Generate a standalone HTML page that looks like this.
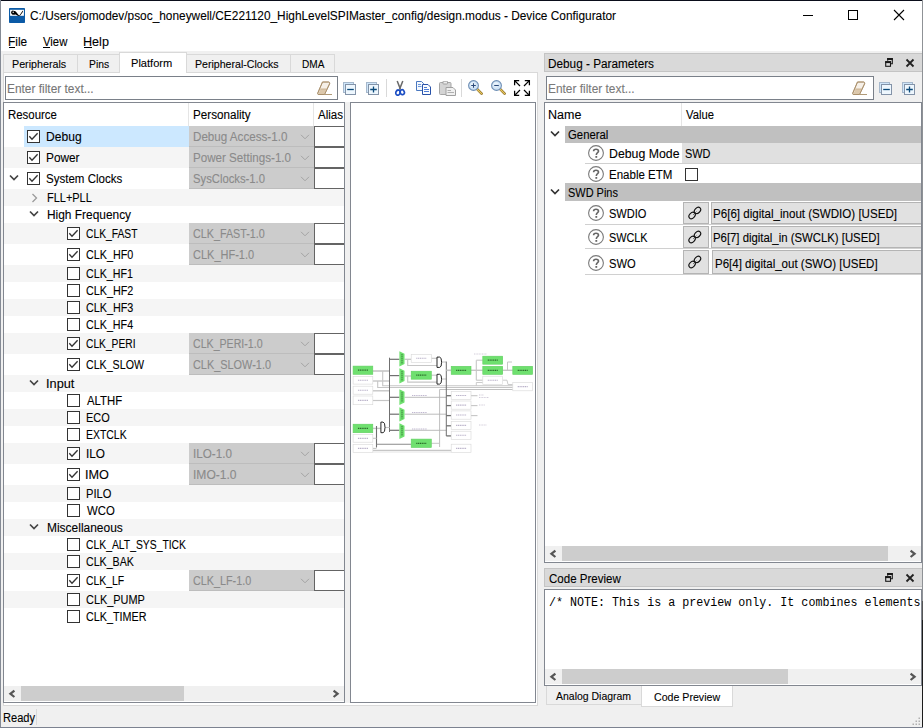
<!DOCTYPE html>
<html><head><meta charset="utf-8"><style>
html,body{margin:0;padding:0;}
body{width:923px;height:728px;overflow:hidden;position:relative;background:#f0f0f0;font-family:"Liberation Sans", sans-serif;}
div,span,svg{position:absolute;box-sizing:border-box;}
.t{white-space:pre;-webkit-text-stroke:0.1px currentColor;}
</style></head><body>

<div style="left:0px;top:0px;width:923px;height:51px;background:#fff;"></div>
<svg style="left:9px;top:8px" width="16" height="15" viewBox="0 0 16 15">
<rect x="0" y="0" width="16" height="15" rx="0.8" fill="#0b5aa6"/>
<rect x="1.1" y="1.8" width="13.8" height="6" fill="#fff"/>
<path d="M4 3.2 C5.5 2.6 6.6 3.2 7.4 4.3 L10.2 7.7 L13.8 2.5 L14 3.8 L10.8 8 H9.3 L6.6 6.6 C5.6 6.8 4.2 6.8 3.3 6 Z" fill="#000"/>
<ellipse cx="3.9" cy="4.6" rx="1.8" ry="2.1" fill="#000"/>
<circle cx="4.2" cy="4.2" r="0.7" fill="#fff"/>
</svg>
<span class="t" style="left:29.68px;top:6px;font-size:12px;line-height:20px;color:#000;transform:scaleX(0.9887);transform-origin:0 0;">C:/Users/jomodev/psoc_honeywell/CE221120_HighLevelSPIMaster_config/design.modus - Device Configurator</span>
<div style="left:803px;top:15px;width:10px;height:1px;background:#000;"></div>
<div style="left:848px;top:10px;width:10px;height:10px;border:1px solid #000;"></div>
<svg style="left:893px;top:9px" width="12" height="12" viewBox="0 0 12 12"><path d="M1 1 L11 11 M11 1 L1 11" stroke="#000" stroke-width="1.1"/></svg>
<span class="t" style="left:8.41px;top:32px;font-size:12px;line-height:20px;color:#000;transform:scaleX(0.9915);transform-origin:0 0;">File</span>
<div style="left:9.4px;top:47px;width:6px;height:1px;background:#000;"></div>
<span class="t" style="left:43.08px;top:32px;font-size:12px;line-height:20px;color:#000;transform:scaleX(0.9437);transform-origin:0 0;">View</span>
<div style="left:43.4px;top:47px;width:7px;height:1px;background:#000;"></div>
<span class="t" style="left:83.15px;top:32px;font-size:12px;line-height:20px;color:#000;transform:scaleX(1.0508);transform-origin:0 0;">Help</span>
<div style="left:84.4px;top:47px;width:8px;height:1px;background:#000;"></div>
<div style="left:3px;top:72px;width:535px;height:634px;background:#fff;border:1px solid #d9d9d9;"></div>
<div style="left:3px;top:54px;width:75px;height:19px;background:#f0f0f0;border:1px solid #d9d9d9;"></div>
<span class="t" style="left:12.05px;top:54px;font-size:11px;line-height:20px;color:#000;transform:scaleX(0.9747);transform-origin:0 0;">Peripherals</span>
<div style="left:77px;top:54px;width:44px;height:19px;background:#f0f0f0;border:1px solid #d9d9d9;"></div>
<span class="t" style="left:88.68px;top:54px;font-size:11px;line-height:20px;color:#000;transform:scaleX(0.9391);transform-origin:0 0;">Pins</span>
<div style="left:186px;top:54px;width:106px;height:19px;background:#f0f0f0;border:1px solid #d9d9d9;"></div>
<span class="t" style="left:195.36px;top:54px;font-size:11px;line-height:20px;color:#000;transform:scaleX(0.9626);transform-origin:0 0;">Peripheral-Clocks</span>
<div style="left:290px;top:54px;width:45px;height:19px;background:#f0f0f0;border:1px solid #d9d9d9;"></div>
<span class="t" style="left:301.70px;top:54px;font-size:11px;line-height:20px;color:#000;transform:scaleX(0.9149);transform-origin:0 0;">DMA</span>
<div style="left:119px;top:52px;width:68px;height:21px;background:#fff;border:1px solid #d9d9d9;border-bottom:none;"></div>
<span class="t" style="left:131.32px;top:53px;font-size:11px;line-height:20px;color:#000;transform:scaleX(1.0083);transform-origin:0 0;">Platform</span>
<div style="left:5px;top:76px;width:333px;height:24px;background:#fff;border:1px solid #7a8089;"></div>
<span class="t" style="left:6.61px;top:79px;font-size:12px;line-height:20px;color:#767676;transform:scaleX(0.9912);transform-origin:0 0;">Enter filter text...</span>
<svg style="left:317px;top:81px" width="16" height="15" viewBox="0 0 16 15">
<path d="M5.5 1 H11.5 C12.5 1 13 2 12.5 3 L7.5 13.5 H1.5 C0.8 13.5 0.5 12.8 0.8 12 Z" fill="#f6f0e8" stroke="#b09a78" stroke-width="0.9"/>
<path d="M3.6 7.5 H10 L7.3 13 H1.3 Z" fill="#dcc8ac"/>
<path d="M3.4 8.2 H9.6" stroke="#c8b090" stroke-width="0.6"/>
<path d="M5.5 1 H11.5 C12.5 1 13 2 12.5 3 L7.5 13.5 H1.5 C0.8 13.5 0.5 12.8 0.8 12 Z" fill="none" stroke="#a88c68" stroke-width="0.9"/>
<path d="M7.5 13.5 H15" stroke="#b09a78" stroke-width="1"/>
</svg>
<svg style="left:343px;top:82px" width="14" height="14" viewBox="0 0 14 14">
<rect x="0.5" y="0.5" width="10" height="10" fill="#cfe6fa" stroke="#a6b8cc"/>
<rect x="2.5" y="2.5" width="10" height="10" fill="#eef7fe" stroke="#8393a8"/>
<path d="M4.2 7.5 H10.8" stroke="#0b4a7a" stroke-width="1.3"/>
</svg>
<svg style="left:366px;top:82px" width="14" height="14" viewBox="0 0 14 14">
<rect x="0.5" y="0.5" width="10" height="10" fill="#cfe6fa" stroke="#a6b8cc"/>
<rect x="2.5" y="2.5" width="10" height="10" fill="#eef7fe" stroke="#8393a8"/>
<path d="M4.2 7.5 H10.8 M7.5 4.6 V10.6" stroke="#0b4a7a" stroke-width="1.3"/>
</svg>
<div style="left:386px;top:79px;width:1px;height:18px;background:#d9d9d9;"></div>
<svg style="left:394px;top:80px" width="12" height="16" viewBox="0 0 12 16">
<path d="M3.2 1 L6.6 9.6 M8.8 1 L5.4 9.6" stroke="#6a6a6a" stroke-width="1.5" fill="none"/>
<ellipse cx="4" cy="12.6" rx="2.1" ry="2.6" transform="rotate(25 4 12.6)" fill="none" stroke="#1d4fc4" stroke-width="1.7"/>
<ellipse cx="8.2" cy="12.2" rx="2.1" ry="2.5" transform="rotate(-25 8.2 12.2)" fill="none" stroke="#1d4fc4" stroke-width="1.7"/>
</svg>
<svg style="left:416px;top:81px" width="16" height="14" viewBox="0 0 16 14">
<path d="M0.5 0.5 H5.5 L7.5 2.5 V9.5 H0.5 Z" fill="#f4f8fd" stroke="#4a78c0" stroke-width="1"/>
<path d="M2 3.5 H5 M2 5.5 H5.5" stroke="#5a8ad8" stroke-width="0.9"/>
<path d="M6.5 3.5 H12 L14.5 6 V13.5 H6.5 Z" fill="#fafcff" stroke="#2952a8" stroke-width="1"/>
<path d="M8 6.5 H11 M8 8.5 H13 M8 10.5 H13" stroke="#3a6ed0" stroke-width="0.9"/>
</svg>
<svg style="left:439px;top:81px" width="17" height="15" viewBox="0 0 17 15">
<rect x="0.5" y="1.5" width="11.5" height="12" rx="1" fill="#d4d4d4" stroke="#a6a6a6"/>
<rect x="4" y="0.2" width="4.5" height="2.8" rx="0.6" fill="#ececec" stroke="#9a9a9a" stroke-width="0.9"/>
<path d="M7 6.5 H14 L16.5 9 V14.5 H7 Z" fill="#f0f0f0" stroke="#a0a0a0"/>
<path d="M8.5 9.5 H12 M8.5 11.5 H15" stroke="#b0b0b0"/>
</svg>
<div style="left:461px;top:79px;width:1px;height:18px;background:#d9d9d9;"></div>
<svg style="left:468px;top:80px" width="16" height="15" viewBox="0 0 16 15">
<path d="M9.2 9.2 L13.6 13.6" stroke="#8a6a20" stroke-width="2.6" stroke-linecap="round"/>
<path d="M9.2 9.2 L13.6 13.6" stroke="#e8c860" stroke-width="1.3" stroke-linecap="round"/>
<circle cx="5.5" cy="5.5" r="4.9" fill="#cfe3f6" stroke="#6f8fb5" stroke-width="1.1"/>
<circle cx="5" cy="4.8" r="2.6" fill="#eaf4fc"/>
<path d="M3.2 5.5 H7.8 M5.5 3.2 V7.8" stroke="#29497a" stroke-width="1.1"/>
</svg>
<svg style="left:491px;top:80px" width="16" height="15" viewBox="0 0 16 15">
<path d="M9.2 9.2 L13.6 13.6" stroke="#8a6a20" stroke-width="2.6" stroke-linecap="round"/>
<path d="M9.2 9.2 L13.6 13.6" stroke="#e8c860" stroke-width="1.3" stroke-linecap="round"/>
<circle cx="5.5" cy="5.5" r="4.9" fill="#cfe3f6" stroke="#6f8fb5" stroke-width="1.1"/>
<circle cx="5" cy="4.8" r="2.6" fill="#eaf4fc"/>
<path d="M3.2 5.5 H7.8" stroke="#29497a" stroke-width="1.1"/>
</svg>
<svg style="left:513px;top:79px" width="18" height="18" viewBox="0 0 18 18">
<g stroke="#000" stroke-width="1.25" fill="none">
<path d="M1.6 6.2 V1.6 H6.2 M2.4 2.4 L7 7"/>
<path d="M16.4 6.2 V1.6 H11.8 M15.6 2.4 L11 7"/>
<path d="M1.6 11.8 V16.4 H6.2 M2.4 15.6 L7 11"/>
<path d="M16.4 11.8 V16.4 H11.8 M15.6 15.6 L11 11"/>
</g></svg>
<div style="left:3px;top:102px;width:342px;height:601px;background:#fff;border:1px solid #828790;"></div>
<span class="t" style="left:7.55px;top:105px;font-size:12px;line-height:20px;color:#000;transform:scaleX(0.9508);transform-origin:0 0;">Resource</span>
<span class="t" style="left:192.83px;top:105px;font-size:12px;line-height:20px;color:#000;transform:scaleX(0.9713);transform-origin:0 0;">Personality</span>
<span class="t" style="left:318.00px;top:105px;font-size:12px;line-height:20px;color:#000;transform:scaleX(0.9600);transform-origin:0 0;">Alias</span>
<div style="left:188px;top:103px;width:1px;height:23px;background:#e5e5e5;"></div>
<div style="left:313px;top:103px;width:1px;height:23px;background:#e5e5e5;"></div>
<div style="left:24px;top:126px;width:165px;height:21px;background:#cce8ff;"></div>
<svg style="left:27px;top:130px" width="13" height="13" viewBox="0 0 13 13">
<rect x="0.5" y="0.5" width="12" height="12" fill="#fff" stroke="#333"/><path d="M2.3 6.3 L5 9.2 L10.6 3.3" fill="none" stroke="#333" stroke-width="1.35"/></svg>
<span class="t" style="left:45.59px;top:127px;font-size:12px;line-height:20px;color:#000;transform:scaleX(1.0082);transform-origin:0 0;">Debug</span>
<div style="left:189px;top:126px;width:125px;height:21px;background:#cccccc;border-bottom:1px solid #bdbdbd;"></div>
<span class="t" style="left:192.83px;top:127px;font-size:12px;line-height:20px;color:#8a8a8a;transform:scaleX(0.9688);transform-origin:0 0;">Debug Access-1.0</span>
<svg style="left:300px;top:134px" width="10" height="6" viewBox="0 0 10 6"><path d="M1 0.8 L5 4.8 L9 0.8" fill="none" stroke="#a3a3a3" stroke-width="1"/></svg>
<div style="left:314px;top:126px;width:31px;height:21px;background:#fff;border:1px solid #646464;border-right:none;"></div>
<div style="left:4px;top:147px;width:340px;height:21px;background:#f5f5f5;"></div>
<svg style="left:27px;top:151px" width="13" height="13" viewBox="0 0 13 13">
<rect x="0.5" y="0.5" width="12" height="12" fill="#fff" stroke="#333"/><path d="M2.3 6.3 L5 9.2 L10.6 3.3" fill="none" stroke="#333" stroke-width="1.35"/></svg>
<span class="t" style="left:45.61px;top:148px;font-size:12px;line-height:20px;color:#000;transform:scaleX(0.9863);transform-origin:0 0;">Power</span>
<div style="left:189px;top:147px;width:125px;height:21px;background:#cccccc;border-bottom:1px solid #bdbdbd;"></div>
<span class="t" style="left:192.83px;top:148px;font-size:12px;line-height:20px;color:#8a8a8a;transform:scaleX(0.9670);transform-origin:0 0;">Power Settings-1.0</span>
<svg style="left:300px;top:155px" width="10" height="6" viewBox="0 0 10 6"><path d="M1 0.8 L5 4.8 L9 0.8" fill="none" stroke="#a3a3a3" stroke-width="1"/></svg>
<div style="left:314px;top:147px;width:31px;height:21px;background:#fff;border:1px solid #646464;border-right:none;"></div>
<svg style="left:27px;top:172px" width="13" height="13" viewBox="0 0 13 13">
<rect x="0.5" y="0.5" width="12" height="12" fill="#fff" stroke="#333"/><path d="M2.3 6.3 L5 9.2 L10.6 3.3" fill="none" stroke="#333" stroke-width="1.35"/></svg>
<span class="t" style="left:46.12px;top:169px;font-size:12px;line-height:20px;color:#000;transform:scaleX(0.9605);transform-origin:0 0;">System Clocks</span>
<svg style="left:8.6px;top:174px" width="10" height="7" viewBox="0 0 10 7"><path d="M1 1.5 L5 5.5 L9 1.5" fill="none" stroke="#444" stroke-width="1.7"/></svg>
<div style="left:189px;top:168px;width:125px;height:21px;background:#cccccc;border-bottom:1px solid #bdbdbd;"></div>
<span class="t" style="left:193.33px;top:169px;font-size:12px;line-height:20px;color:#8a8a8a;transform:scaleX(0.9386);transform-origin:0 0;">SysClocks-1.0</span>
<svg style="left:300px;top:176px" width="10" height="6" viewBox="0 0 10 6"><path d="M1 0.8 L5 4.8 L9 0.8" fill="none" stroke="#a3a3a3" stroke-width="1"/></svg>
<div style="left:314px;top:168px;width:31px;height:21px;background:#fff;border:1px solid #646464;border-right:none;"></div>
<div style="left:4px;top:189px;width:340px;height:17px;background:#f5f5f5;"></div>
<svg style="left:31px;top:193px" width="7" height="10" viewBox="0 0 7 10"><path d="M1.5 1 L5.5 5 L1.5 9" fill="none" stroke="#9a9a9a" stroke-width="1.3"/></svg>
<span class="t" style="left:46.69px;top:188px;font-size:12px;line-height:20px;color:#000;transform:scaleX(0.9134);transform-origin:0 0;">FLL+PLL</span>
<svg style="left:28.8px;top:210px" width="10" height="7" viewBox="0 0 10 7"><path d="M1 1.5 L5 5.5 L9 1.5" fill="none" stroke="#444" stroke-width="1.7"/></svg>
<span class="t" style="left:46.61px;top:205px;font-size:12px;line-height:20px;color:#000;transform:scaleX(0.9922);transform-origin:0 0;">High Frequency</span>
<div style="left:4px;top:223px;width:340px;height:21px;background:#f5f5f5;"></div>
<svg style="left:67px;top:227px" width="13" height="13" viewBox="0 0 13 13">
<rect x="0.5" y="0.5" width="12" height="12" fill="#fff" stroke="#333"/><path d="M2.3 6.3 L5 9.2 L10.6 3.3" fill="none" stroke="#333" stroke-width="1.35"/></svg>
<span class="t" style="left:86.06px;top:224px;font-size:12px;line-height:20px;color:#000;transform:scaleX(0.8574);transform-origin:0 0;">CLK_FAST</span>
<div style="left:189px;top:223px;width:125px;height:21px;background:#cccccc;border-bottom:1px solid #bdbdbd;"></div>
<span class="t" style="left:193.24px;top:224px;font-size:12px;line-height:20px;color:#8a8a8a;transform:scaleX(0.8962);transform-origin:0 0;">CLK_FAST-1.0</span>
<svg style="left:300px;top:231px" width="10" height="6" viewBox="0 0 10 6"><path d="M1 0.8 L5 4.8 L9 0.8" fill="none" stroke="#a3a3a3" stroke-width="1"/></svg>
<div style="left:314px;top:223px;width:31px;height:21px;background:#fff;border:1px solid #646464;border-right:none;"></div>
<svg style="left:67px;top:248px" width="13" height="13" viewBox="0 0 13 13">
<rect x="0.5" y="0.5" width="12" height="12" fill="#fff" stroke="#333"/><path d="M2.3 6.3 L5 9.2 L10.6 3.3" fill="none" stroke="#333" stroke-width="1.35"/></svg>
<span class="t" style="left:86.04px;top:245px;font-size:12px;line-height:20px;color:#000;transform:scaleX(0.8969);transform-origin:0 0;">CLK_HF0</span>
<div style="left:189px;top:244px;width:125px;height:21px;background:#cccccc;border-bottom:1px solid #bdbdbd;"></div>
<span class="t" style="left:193.23px;top:245px;font-size:12px;line-height:20px;color:#8a8a8a;transform:scaleX(0.9158);transform-origin:0 0;">CLK_HF-1.0</span>
<svg style="left:300px;top:252px" width="10" height="6" viewBox="0 0 10 6"><path d="M1 0.8 L5 4.8 L9 0.8" fill="none" stroke="#a3a3a3" stroke-width="1"/></svg>
<div style="left:314px;top:244px;width:31px;height:21px;background:#fff;border:1px solid #646464;border-right:none;"></div>
<div style="left:4px;top:265px;width:340px;height:17px;background:#f5f5f5;"></div>
<svg style="left:67px;top:267px" width="13" height="13" viewBox="0 0 13 13">
<rect x="0.5" y="0.5" width="12" height="12" fill="#fff" stroke="#333"/></svg>
<span class="t" style="left:86.04px;top:264px;font-size:12px;line-height:20px;color:#000;transform:scaleX(0.8893);transform-origin:0 0;">CLK_HF1</span>
<svg style="left:67px;top:284px" width="13" height="13" viewBox="0 0 13 13">
<rect x="0.5" y="0.5" width="12" height="12" fill="#fff" stroke="#333"/></svg>
<span class="t" style="left:86.04px;top:281px;font-size:12px;line-height:20px;color:#000;transform:scaleX(0.8990);transform-origin:0 0;">CLK_HF2</span>
<div style="left:4px;top:299px;width:340px;height:17px;background:#f5f5f5;"></div>
<svg style="left:67px;top:301px" width="13" height="13" viewBox="0 0 13 13">
<rect x="0.5" y="0.5" width="12" height="12" fill="#fff" stroke="#333"/></svg>
<span class="t" style="left:86.04px;top:298px;font-size:12px;line-height:20px;color:#000;transform:scaleX(0.8990);transform-origin:0 0;">CLK_HF3</span>
<svg style="left:67px;top:318px" width="13" height="13" viewBox="0 0 13 13">
<rect x="0.5" y="0.5" width="12" height="12" fill="#fff" stroke="#333"/></svg>
<span class="t" style="left:86.04px;top:315px;font-size:12px;line-height:20px;color:#000;transform:scaleX(0.8947);transform-origin:0 0;">CLK_HF4</span>
<div style="left:4px;top:333px;width:340px;height:21px;background:#f5f5f5;"></div>
<svg style="left:67px;top:337px" width="13" height="13" viewBox="0 0 13 13">
<rect x="0.5" y="0.5" width="12" height="12" fill="#fff" stroke="#333"/><path d="M2.3 6.3 L5 9.2 L10.6 3.3" fill="none" stroke="#333" stroke-width="1.35"/></svg>
<span class="t" style="left:86.07px;top:334px;font-size:12px;line-height:20px;color:#000;transform:scaleX(0.8532);transform-origin:0 0;">CLK_PERI</span>
<div style="left:189px;top:333px;width:125px;height:21px;background:#cccccc;border-bottom:1px solid #bdbdbd;"></div>
<span class="t" style="left:193.25px;top:334px;font-size:12px;line-height:20px;color:#8a8a8a;transform:scaleX(0.8837);transform-origin:0 0;">CLK_PERI-1.0</span>
<svg style="left:300px;top:341px" width="10" height="6" viewBox="0 0 10 6"><path d="M1 0.8 L5 4.8 L9 0.8" fill="none" stroke="#a3a3a3" stroke-width="1"/></svg>
<div style="left:314px;top:333px;width:31px;height:21px;background:#fff;border:1px solid #646464;border-right:none;"></div>
<svg style="left:67px;top:358px" width="13" height="13" viewBox="0 0 13 13">
<rect x="0.5" y="0.5" width="12" height="12" fill="#fff" stroke="#333"/><path d="M2.3 6.3 L5 9.2 L10.6 3.3" fill="none" stroke="#333" stroke-width="1.35"/></svg>
<span class="t" style="left:86.05px;top:355px;font-size:12px;line-height:20px;color:#000;transform:scaleX(0.8867);transform-origin:0 0;">CLK_SLOW</span>
<div style="left:189px;top:354px;width:125px;height:21px;background:#cccccc;border-bottom:1px solid #bdbdbd;"></div>
<span class="t" style="left:193.23px;top:355px;font-size:12px;line-height:20px;color:#8a8a8a;transform:scaleX(0.9086);transform-origin:0 0;">CLK_SLOW-1.0</span>
<svg style="left:300px;top:362px" width="10" height="6" viewBox="0 0 10 6"><path d="M1 0.8 L5 4.8 L9 0.8" fill="none" stroke="#a3a3a3" stroke-width="1"/></svg>
<div style="left:314px;top:354px;width:31px;height:21px;background:#fff;border:1px solid #646464;border-right:none;"></div>
<div style="left:4px;top:375px;width:340px;height:17px;background:#f5f5f5;"></div>
<svg style="left:28.8px;top:379px" width="10" height="7" viewBox="0 0 10 7"><path d="M1 1.5 L5 5.5 L9 1.5" fill="none" stroke="#444" stroke-width="1.7"/></svg>
<span class="t" style="left:46.40px;top:374px;font-size:12px;line-height:20px;color:#000;transform:scaleX(1.0627);transform-origin:0 0;">Input</span>
<svg style="left:67px;top:394px" width="13" height="13" viewBox="0 0 13 13">
<rect x="0.5" y="0.5" width="12" height="12" fill="#fff" stroke="#333"/></svg>
<span class="t" style="left:86.60px;top:391px;font-size:12px;line-height:20px;color:#000;transform:scaleX(0.9474);transform-origin:0 0;">ALTHF</span>
<div style="left:4px;top:409px;width:340px;height:17px;background:#f5f5f5;"></div>
<svg style="left:67px;top:411px" width="13" height="13" viewBox="0 0 13 13">
<rect x="0.5" y="0.5" width="12" height="12" fill="#fff" stroke="#333"/></svg>
<span class="t" style="left:85.69px;top:408px;font-size:12px;line-height:20px;color:#000;transform:scaleX(0.9108);transform-origin:0 0;">ECO</span>
<svg style="left:67px;top:428px" width="13" height="13" viewBox="0 0 13 13">
<rect x="0.5" y="0.5" width="12" height="12" fill="#fff" stroke="#333"/></svg>
<span class="t" style="left:85.73px;top:425px;font-size:12px;line-height:20px;color:#000;transform:scaleX(0.8703);transform-origin:0 0;">EXTCLK</span>
<div style="left:4px;top:443px;width:340px;height:21px;background:#f5f5f5;"></div>
<svg style="left:67px;top:447px" width="13" height="13" viewBox="0 0 13 13">
<rect x="0.5" y="0.5" width="12" height="12" fill="#fff" stroke="#333"/><path d="M2.3 6.3 L5 9.2 L10.6 3.3" fill="none" stroke="#333" stroke-width="1.35"/></svg>
<span class="t" style="left:85.50px;top:444px;font-size:12px;line-height:20px;color:#000;transform:scaleX(0.9816);transform-origin:0 0;">ILO</span>
<div style="left:189px;top:443px;width:125px;height:21px;background:#cccccc;border-bottom:1px solid #bdbdbd;"></div>
<span class="t" style="left:192.71px;top:444px;font-size:12px;line-height:20px;color:#8a8a8a;transform:scaleX(0.9714);transform-origin:0 0;">ILO-1.0</span>
<svg style="left:300px;top:451px" width="10" height="6" viewBox="0 0 10 6"><path d="M1 0.8 L5 4.8 L9 0.8" fill="none" stroke="#a3a3a3" stroke-width="1"/></svg>
<div style="left:314px;top:443px;width:31px;height:21px;background:#fff;border:1px solid #646464;border-right:none;"></div>
<svg style="left:67px;top:468px" width="13" height="13" viewBox="0 0 13 13">
<rect x="0.5" y="0.5" width="12" height="12" fill="#fff" stroke="#333"/><path d="M2.3 6.3 L5 9.2 L10.6 3.3" fill="none" stroke="#333" stroke-width="1.35"/></svg>
<span class="t" style="left:85.41px;top:465px;font-size:12px;line-height:20px;color:#000;transform:scaleX(1.0571);transform-origin:0 0;">IMO</span>
<div style="left:189px;top:464px;width:125px;height:21px;background:#cccccc;border-bottom:1px solid #bdbdbd;"></div>
<span class="t" style="left:192.67px;top:465px;font-size:12px;line-height:20px;color:#8a8a8a;transform:scaleX(1.0036);transform-origin:0 0;">IMO-1.0</span>
<svg style="left:300px;top:472px" width="10" height="6" viewBox="0 0 10 6"><path d="M1 0.8 L5 4.8 L9 0.8" fill="none" stroke="#a3a3a3" stroke-width="1"/></svg>
<div style="left:314px;top:464px;width:31px;height:21px;background:#fff;border:1px solid #646464;border-right:none;"></div>
<div style="left:4px;top:485px;width:340px;height:17px;background:#f5f5f5;"></div>
<svg style="left:67px;top:487px" width="13" height="13" viewBox="0 0 13 13">
<rect x="0.5" y="0.5" width="12" height="12" fill="#fff" stroke="#333"/></svg>
<span class="t" style="left:85.67px;top:484px;font-size:12px;line-height:20px;color:#000;transform:scaleX(0.9282);transform-origin:0 0;">PILO</span>
<svg style="left:67px;top:504px" width="13" height="13" viewBox="0 0 13 13">
<rect x="0.5" y="0.5" width="12" height="12" fill="#fff" stroke="#333"/></svg>
<span class="t" style="left:86.60px;top:501px;font-size:12px;line-height:20px;color:#000;transform:scaleX(0.9461);transform-origin:0 0;">WCO</span>
<div style="left:4px;top:519px;width:340px;height:17px;background:#f5f5f5;"></div>
<svg style="left:28.8px;top:523px" width="10" height="7" viewBox="0 0 10 7"><path d="M1 1.5 L5 5.5 L9 1.5" fill="none" stroke="#444" stroke-width="1.7"/></svg>
<span class="t" style="left:46.60px;top:518px;font-size:12px;line-height:20px;color:#000;transform:scaleX(0.9970);transform-origin:0 0;">Miscellaneous</span>
<svg style="left:67px;top:538px" width="13" height="13" viewBox="0 0 13 13">
<rect x="0.5" y="0.5" width="12" height="12" fill="#fff" stroke="#333"/></svg>
<span class="t" style="left:86.06px;top:535px;font-size:12px;line-height:20px;color:#000;transform:scaleX(0.8634);transform-origin:0 0;">CLK_ALT_SYS_TICK</span>
<div style="left:4px;top:553px;width:340px;height:17px;background:#f5f5f5;"></div>
<svg style="left:67px;top:555px" width="13" height="13" viewBox="0 0 13 13">
<rect x="0.5" y="0.5" width="12" height="12" fill="#fff" stroke="#333"/></svg>
<span class="t" style="left:86.05px;top:552px;font-size:12px;line-height:20px;color:#000;transform:scaleX(0.8864);transform-origin:0 0;">CLK_BAK</span>
<svg style="left:67px;top:574px" width="13" height="13" viewBox="0 0 13 13">
<rect x="0.5" y="0.5" width="12" height="12" fill="#fff" stroke="#333"/><path d="M2.3 6.3 L5 9.2 L10.6 3.3" fill="none" stroke="#333" stroke-width="1.35"/></svg>
<span class="t" style="left:86.06px;top:571px;font-size:12px;line-height:20px;color:#000;transform:scaleX(0.8674);transform-origin:0 0;">CLK_LF</span>
<div style="left:189px;top:570px;width:125px;height:21px;background:#cccccc;border-bottom:1px solid #bdbdbd;"></div>
<span class="t" style="left:193.24px;top:571px;font-size:12px;line-height:20px;color:#8a8a8a;transform:scaleX(0.8990);transform-origin:0 0;">CLK_LF-1.0</span>
<svg style="left:300px;top:578px" width="10" height="6" viewBox="0 0 10 6"><path d="M1 0.8 L5 4.8 L9 0.8" fill="none" stroke="#a3a3a3" stroke-width="1"/></svg>
<div style="left:314px;top:570px;width:31px;height:21px;background:#fff;border:1px solid #646464;border-right:none;"></div>
<div style="left:4px;top:591px;width:340px;height:17px;background:#f5f5f5;"></div>
<svg style="left:67px;top:593px" width="13" height="13" viewBox="0 0 13 13">
<rect x="0.5" y="0.5" width="12" height="12" fill="#fff" stroke="#333"/></svg>
<span class="t" style="left:86.03px;top:590px;font-size:12px;line-height:20px;color:#000;transform:scaleX(0.9105);transform-origin:0 0;">CLK_PUMP</span>
<svg style="left:67px;top:610px" width="13" height="13" viewBox="0 0 13 13">
<rect x="0.5" y="0.5" width="12" height="12" fill="#fff" stroke="#333"/></svg>
<span class="t" style="left:86.04px;top:607px;font-size:12px;line-height:20px;color:#000;transform:scaleX(0.8968);transform-origin:0 0;">CLK_TIMER</span>
<div style="left:4px;top:686px;width:340px;height:15px;background:#f0f0f0;"></div>
<div style="left:21px;top:686px;width:163px;height:15px;background:#cdcdcd;"></div>
<svg style="left:8px;top:689px" width="8" height="10" viewBox="0 0 8 10"><path d="M6.4 1.6 L2.4 4.8 L6.4 8" fill="none" stroke="#555" stroke-width="2.2"/></svg>
<svg style="left:332px;top:689px" width="8" height="10" viewBox="0 0 8 10"><path d="M1.6 1.6 L5.6 4.8 L1.6 8" fill="none" stroke="#555" stroke-width="2.2"/></svg>
<div style="left:3px;top:102px;width:342px;height:601px;border:1px solid #828790;"></div>
<div style="left:345px;top:102px;width:5px;height:601px;background:#f0f0f0;"></div>
<div style="left:350px;top:102px;width:186px;height:601px;background:#fff;border:1px solid #828790;"></div>
<svg style="left:0;top:0" width="923" height="728" viewBox="0 0 923 728"><path d="M372.8 371 L389.5 371" stroke="#c6c6c6" stroke-width="1.6" fill="none"/><path d="M372.8 381 L389.5 381" stroke="#c6c6c6" stroke-width="1.4" fill="none"/><path d="M372.8 390.8 L389.5 390.8" stroke="#c6c6c6" stroke-width="1.4" fill="none"/><path d="M372.8 400.5 L389.5 400.5" stroke="#c6c6c6" stroke-width="1.2" fill="none"/><path d="M382.7 371 L382.7 385.7 L512.8 385.7" stroke="#c6c6c6" stroke-width="1.1" fill="none"/><path d="M377.7 381 L377.7 387.5 L512.8 387.5" stroke="#c6c6c6" stroke-width="1.1" fill="none"/><path d="M439.6 447 L439.6 389.5 L512.8 389.5" stroke="#b8b8b8" stroke-width="0.9" fill="none"/><path d="M389.5 357.7 L389.5 432" stroke="#707070" stroke-width="1.0" fill="none"/><path d="M389.5 359.3 L399.4 359.3" stroke="#707070" stroke-width="1.2" fill="none"/><path d="M389.5 375.6 L399.4 375.6" stroke="#707070" stroke-width="1.2" fill="none"/><path d="M389.5 397.3 L399.4 397.3" stroke="#707070" stroke-width="1.2" fill="none"/><path d="M389.5 414.2 L399.4 414.2" stroke="#707070" stroke-width="1.2" fill="none"/><path d="M389.5 430.3 L399.4 430.3" stroke="#707070" stroke-width="1.2" fill="none"/><path d="M404.5 359.3 L411.2 359.3" stroke="#c6c6c6" stroke-width="1.3" fill="none"/><path d="M407.7 359.3 L407.7 365.5 L437 365.5" stroke="#c6c6c6" stroke-width="1.1" fill="none"/><path d="M431.3 358.3 L437 358.3" stroke="#c6c6c6" stroke-width="1.1" fill="none"/><path d="M404.5 376 L411.2 376" stroke="#c6c6c6" stroke-width="1.3" fill="none"/><path d="M407.7 376 L407.7 382.1 L437 382.1" stroke="#c6c6c6" stroke-width="1.1" fill="none"/><path d="M431.3 375.2 L437 375.2" stroke="#c6c6c6" stroke-width="1.1" fill="none"/><path d="M441.6 362 L446.4 362" stroke="#c6c6c6" stroke-width="1.1" fill="none"/><path d="M441.6 379 L446.4 379" stroke="#c6c6c6" stroke-width="1.1" fill="none"/><path d="M404.5 397.3 L446.4 397.3" stroke="#b4b4b4" stroke-width="0.9" fill="none"/><path d="M404.5 414.2 L446.4 414.2" stroke="#b4b4b4" stroke-width="0.9" fill="none"/><path d="M404.5 430.3 L446.4 430.3" stroke="#b4b4b4" stroke-width="0.9" fill="none"/><path d="M446.3 361.6 L446.3 436" stroke="#707070" stroke-width="1.0" fill="none"/><path d="M446.3 370.3 L451.2 370.3" stroke="#c6c6c6" stroke-width="1.6" fill="none"/><path d="M446.3 395.7 L451.2 395.7" stroke="#707070" stroke-width="1.3" fill="none"/><path d="M446.3 405.6 L451.2 405.6" stroke="#707070" stroke-width="1.3" fill="none"/><path d="M446.3 415.6 L451.2 415.6" stroke="#707070" stroke-width="1.3" fill="none"/><path d="M446.3 425.8 L451.2 425.8" stroke="#707070" stroke-width="1.3" fill="none"/><path d="M446.3 435.9 L451.2 435.9" stroke="#707070" stroke-width="1.3" fill="none"/><path d="M471 370.3 L482.8 370.3" stroke="#c6c6c6" stroke-width="1.4" fill="none"/><path d="M476.3 360.2 L476.3 380.2" stroke="#c6c6c6" stroke-width="1.1" fill="none"/><path d="M476.3 360.2 L482.8 360.2" stroke="#c6c6c6" stroke-width="1.1" fill="none"/><path d="M476.3 380.2 L482.8 380.2" stroke="#c6c6c6" stroke-width="1.1" fill="none"/><path d="M502.7 370.3 L512.8 370.3" stroke="#c6c6c6" stroke-width="1.4" fill="none"/><path d="M507.5 370.3 L507.5 362 L512 362" stroke="#c6c6c6" stroke-width="1.0" fill="none"/><path d="M502.7 380.2 L507 380.2 L508 384.5 L512.8 384.5" stroke="#c6c6c6" stroke-width="0.9" fill="none"/><path d="M476.3 385.7 L476.3 382.5 L482.8 382.5" stroke="#c6c6c6" stroke-width="0.9" fill="none"/><path d="M471 395.7 L477.5 395.7" stroke="#c6c6c6" stroke-width="1.1" fill="none"/><path d="M471 405.6 L477.5 405.6" stroke="#c6c6c6" stroke-width="1.1" fill="none"/><path d="M471 415.6 L477.5 415.6" stroke="#c6c6c6" stroke-width="1.1" fill="none"/><path d="M372.8 428.4 L380.9 428.4" stroke="#c6c6c6" stroke-width="1.4" fill="none"/><path d="M385 427.5 L389.5 427.5" stroke="#c6c6c6" stroke-width="1.1" fill="none"/><path d="M376.5 426 L376.5 447.5" stroke="#707070" stroke-width="1.1" fill="none"/><path d="M372.8 438.3 L376.5 438.3" stroke="#c6c6c6" stroke-width="1.1" fill="none"/><path d="M372.8 448.4 L376.5 448.4" stroke="#c6c6c6" stroke-width="1.1" fill="none"/><path d="M376.5 444.3 L411.2 444.3" stroke="#8a8a8a" stroke-width="1.1" fill="none"/><path d="M431.3 443.3 L439.6 443.3" stroke="#c6c6c6" stroke-width="1.0" fill="none"/><path d="M372.8 450.4 L451.2 450.4" stroke="#c6c6c6" stroke-width="1.1" fill="none"/><path d="M372.8 452 L451.2 452" stroke="#dcdcdc" stroke-width="0.8" fill="none"/><rect x="353.1" y="366.1" width="19.69999999999999" height="8.199999999999989" fill="#6fe06f" stroke="#5fcf5f" stroke-width="0.6"/><rect x="353.1" y="376.4" width="19.69999999999999" height="7.7000000000000455" fill="#fff" stroke="#d8d8d8" stroke-width="0.6"/><rect x="353.1" y="386.2" width="19.69999999999999" height="8.0" fill="#fff" stroke="#d8d8d8" stroke-width="0.6"/><rect x="353.1" y="396" width="19.69999999999999" height="8.699999999999989" fill="#fff" stroke="#d8d8d8" stroke-width="0.6"/><rect x="353.1" y="424.2" width="19.69999999999999" height="8.5" fill="#6fe06f" stroke="#5fcf5f" stroke-width="0.6"/><rect x="353.1" y="434.5" width="19.69999999999999" height="7.699999999999989" fill="#fff" stroke="#d8d8d8" stroke-width="0.6"/><rect x="353.1" y="444.3" width="19.69999999999999" height="8.199999999999989" fill="#fff" stroke="#d8d8d8" stroke-width="0.6"/><path d="M399.4 351.2 L404.5 353.7 L404.5 364.1 L399.4 366.6 Z" fill="#6fe06f"/><path d="M399.4 368.2 L404.5 370.7 L404.5 381.1 L399.4 383.6 Z" fill="#6fe06f"/><path d="M399.4 389.3 L404.5 391.8 L404.5 402.5 L399.4 405 Z" fill="#6fe06f"/><path d="M399.4 407.2 L404.5 409.7 L404.5 419.1 L399.4 421.6 Z" fill="#6fe06f"/><path d="M399.4 423.2 L404.5 425.7 L404.5 436.4 L399.4 438.9 Z" fill="#6fe06f"/><rect x="411.2" y="354.3" width="20.100000000000023" height="8.0" fill="#fff" stroke="#d8d8d8" stroke-width="0.6"/><rect x="411.2" y="371.2" width="20.100000000000023" height="8.0" fill="#6fe06f" stroke="#5fcf5f" stroke-width="0.6"/><path d="M437 357.1 H439.6 Q441.6 357.1 441.6 362.25 Q441.6 367.4 439.6 367.4 H437 Z" fill="#fff" stroke="#111" stroke-width="0.9"/><path d="M437 374.3 H439.6 Q441.6 374.3 441.6 379.20000000000005 Q441.6 384.1 439.6 384.1 H437 Z" fill="#fff" stroke="#111" stroke-width="0.9"/><path d="M380.9 422.1 H383 Q385 422.1 385 427.4 Q385 432.7 383 432.7 H380.9 Z" fill="#fff" stroke="#111" stroke-width="0.9"/><rect x="411.2" y="439.1" width="20.100000000000023" height="8.399999999999977" fill="#6fe06f" stroke="#5fcf5f" stroke-width="0.6"/><rect x="451.2" y="366.3" width="19.80000000000001" height="8.099999999999966" fill="#6fe06f" stroke="#5fcf5f" stroke-width="0.6"/><rect x="482.8" y="356.2" width="19.899999999999977" height="8.0" fill="#6fe06f" stroke="#5fcf5f" stroke-width="0.6"/><rect x="482.8" y="366.3" width="19.899999999999977" height="8.099999999999966" fill="#6fe06f" stroke="#5fcf5f" stroke-width="0.6"/><rect x="512.8" y="366.3" width="19.800000000000068" height="8.099999999999966" fill="#6fe06f" stroke="#5fcf5f" stroke-width="0.6"/><rect x="482.8" y="376.2" width="19.899999999999977" height="8.100000000000023" fill="#fff" stroke="#d8d8d8" stroke-width="0.6"/><rect x="512.8" y="382.4" width="19.800000000000068" height="8.400000000000034" fill="#fff" stroke="#d8d8d8" stroke-width="0.6"/><rect x="451.2" y="391.3" width="19.80000000000001" height="8.300000000000011" fill="#fff" stroke="#d8d8d8" stroke-width="0.6"/><rect x="451.2" y="401" width="19.80000000000001" height="8.199999999999989" fill="#fff" stroke="#d8d8d8" stroke-width="0.6"/><rect x="451.2" y="410.9" width="19.80000000000001" height="8.300000000000011" fill="#fff" stroke="#d8d8d8" stroke-width="0.6"/><rect x="451.2" y="421.3" width="19.80000000000001" height="8.099999999999966" fill="#fff" stroke="#d8d8d8" stroke-width="0.6"/><rect x="451.2" y="431.2" width="19.80000000000001" height="8.100000000000023" fill="#fff" stroke="#d8d8d8" stroke-width="0.6"/><rect x="451.2" y="444.2" width="19.80000000000001" height="8.300000000000011" fill="#fff" stroke="#d8d8d8" stroke-width="0.6"/><path d="M357.95000000000005 370.20000000000005 H367.95000000000005" stroke="#2a6a2a" stroke-width="1.2" stroke-dasharray="1.2 0.6"/><path d="M357.95000000000005 428.45 H367.95000000000005" stroke="#2a6a2a" stroke-width="1.2" stroke-dasharray="1.2 0.6"/><path d="M416.25 375.2 H426.25" stroke="#2a6a2a" stroke-width="1.2" stroke-dasharray="1.2 0.6"/><path d="M416.25 443.3 H426.25" stroke="#2a6a2a" stroke-width="1.2" stroke-dasharray="1.2 0.6"/><path d="M456.1 370.35 H466.1" stroke="#2a6a2a" stroke-width="1.2" stroke-dasharray="1.2 0.6"/><path d="M487.75 360.2 H497.75" stroke="#2a6a2a" stroke-width="1.2" stroke-dasharray="1.2 0.6"/><path d="M487.75 370.35 H497.75" stroke="#2a6a2a" stroke-width="1.2" stroke-dasharray="1.2 0.6"/><path d="M517.7 370.35 H527.7" stroke="#2a6a2a" stroke-width="1.2" stroke-dasharray="1.2 0.6"/><path d="M357.95000000000005 380.25 H367.95000000000005" stroke="#b8b0c8" stroke-width="1.1" stroke-dasharray="1.2 0.6"/><path d="M357.95000000000005 390.2 H367.95000000000005" stroke="#b8b0c8" stroke-width="1.1" stroke-dasharray="1.2 0.6"/><path d="M357.95000000000005 400.35 H367.95000000000005" stroke="#b8b0c8" stroke-width="1.1" stroke-dasharray="1.2 0.6"/><path d="M357.95000000000005 438.35 H367.95000000000005" stroke="#b8b0c8" stroke-width="1.1" stroke-dasharray="1.2 0.6"/><path d="M357.95000000000005 448.4 H367.95000000000005" stroke="#b8b0c8" stroke-width="1.1" stroke-dasharray="1.2 0.6"/><path d="M416.25 358.3 H426.25" stroke="#b8b0c8" stroke-width="1.1" stroke-dasharray="1.2 0.6"/><path d="M487.75 380.25 H497.75" stroke="#b8b0c8" stroke-width="1.1" stroke-dasharray="1.2 0.6"/><path d="M517.7 386.6 H527.7" stroke="#b8b0c8" stroke-width="1.1" stroke-dasharray="1.2 0.6"/><path d="M456.1 395.45000000000005 H466.1" stroke="#b8b0c8" stroke-width="1.1" stroke-dasharray="1.2 0.6"/><path d="M456.1 405.1 H466.1" stroke="#b8b0c8" stroke-width="1.1" stroke-dasharray="1.2 0.6"/><path d="M456.1 415.04999999999995 H466.1" stroke="#b8b0c8" stroke-width="1.1" stroke-dasharray="1.2 0.6"/><path d="M456.1 425.35 H466.1" stroke="#b8b0c8" stroke-width="1.1" stroke-dasharray="1.2 0.6"/><path d="M456.1 435.25 H466.1" stroke="#b8b0c8" stroke-width="1.1" stroke-dasharray="1.2 0.6"/><path d="M456.1 448.35 H466.1" stroke="#b8b0c8" stroke-width="1.1" stroke-dasharray="1.2 0.6"/><path d="M412 395.5 H427" stroke="#c0b8d0" stroke-width="1" stroke-dasharray="1.2 0.6"/><path d="M412 412.5 H427" stroke="#c0b8d0" stroke-width="1" stroke-dasharray="1.2 0.6"/><path d="M412 429.0 H427" stroke="#c0b8d0" stroke-width="1" stroke-dasharray="1.2 0.6"/><path d="M474 354 H487" stroke="#c8c0d0" stroke-width="0.8" stroke-dasharray="1 0.6"/><path d="M479 395 H484" stroke="#c8c0d0" stroke-width="0.8" stroke-dasharray="1 0.6"/><path d="M479 397.5 H489" stroke="#c8c0d0" stroke-width="0.8" stroke-dasharray="1 0.6"/><path d="M479 405 H485" stroke="#c8c0d0" stroke-width="0.8" stroke-dasharray="1 0.6"/><path d="M479 425 H487" stroke="#c8c0d0" stroke-width="0.8" stroke-dasharray="1 0.6"/><path d="M402 354.2 V363.6" stroke="#2a6a2a" stroke-width="1" stroke-dasharray="1.2 0.8"/><path d="M402 371.2 V380.6" stroke="#2a6a2a" stroke-width="1" stroke-dasharray="1.2 0.8"/><path d="M402 392.3 V402" stroke="#2a6a2a" stroke-width="1" stroke-dasharray="1.2 0.8"/><path d="M402 410.2 V418.6" stroke="#2a6a2a" stroke-width="1" stroke-dasharray="1.2 0.8"/><path d="M402 426.2 V435.9" stroke="#2a6a2a" stroke-width="1" stroke-dasharray="1.2 0.8"/></svg>
<div style="left:544px;top:53px;width:379px;height:19px;background:#d9d9d9;border:1px solid #c4c4c4;border-right:none;"></div>
<span class="t" style="left:548.22px;top:54px;font-size:12px;line-height:20px;color:#000;transform:scaleX(0.9810);transform-origin:0 0;">Debug - Parameters</span>
<svg style="left:884px;top:57px" width="11" height="11" viewBox="0 0 11 11">
<path d="M3.7 3.8 V1.6 H8.3 V6.7 H7" fill="none" stroke="#1a1a1a" stroke-width="1.1"/>
<rect x="3.2" y="1.1" width="5.6" height="1.9" fill="#1a1a1a"/>
<rect x="1.7" y="4.7" width="4.8" height="4.6" fill="none" stroke="#1a1a1a" stroke-width="1.1"/>
<rect x="1.2" y="4.2" width="5.8" height="1.9" fill="#1a1a1a"/>
</svg>
<svg style="left:905px;top:58px" width="10" height="10" viewBox="0 0 10 10"><path d="M1.5 1.5 L8.5 8.5 M8.5 1.5 L1.5 8.5" stroke="#222" stroke-width="1.8"/></svg>
<div style="left:546px;top:76px;width:328px;height:24px;background:#fff;border:1px solid #7a8089;"></div>
<span class="t" style="left:547.91px;top:79px;font-size:12px;line-height:20px;color:#7a7a7a;transform:scaleX(0.9912);transform-origin:0 0;">Enter filter text...</span>
<svg style="left:852px;top:81px" width="16" height="15" viewBox="0 0 16 15">
<path d="M5.5 1 H11.5 C12.5 1 13 2 12.5 3 L7.5 13.5 H1.5 C0.8 13.5 0.5 12.8 0.8 12 Z" fill="#f6f0e8" stroke="#b09a78" stroke-width="0.9"/>
<path d="M3.6 7.5 H10 L7.3 13 H1.3 Z" fill="#dcc8ac"/>
<path d="M3.4 8.2 H9.6" stroke="#c8b090" stroke-width="0.6"/>
<path d="M5.5 1 H11.5 C12.5 1 13 2 12.5 3 L7.5 13.5 H1.5 C0.8 13.5 0.5 12.8 0.8 12 Z" fill="none" stroke="#a88c68" stroke-width="0.9"/>
<path d="M7.5 13.5 H15" stroke="#b09a78" stroke-width="1"/>
</svg>
<svg style="left:879px;top:82px" width="14" height="14" viewBox="0 0 14 14">
<rect x="0.5" y="0.5" width="10" height="10" fill="#cfe6fa" stroke="#a6b8cc"/>
<rect x="2.5" y="2.5" width="10" height="10" fill="#eef7fe" stroke="#8393a8"/>
<path d="M4.2 7.5 H10.8" stroke="#0b4a7a" stroke-width="1.3"/>
</svg>
<svg style="left:902px;top:82px" width="14" height="14" viewBox="0 0 14 14">
<rect x="0.5" y="0.5" width="10" height="10" fill="#cfe6fa" stroke="#a6b8cc"/>
<rect x="2.5" y="2.5" width="10" height="10" fill="#eef7fe" stroke="#8393a8"/>
<path d="M4.2 7.5 H10.8 M7.5 4.6 V10.6" stroke="#0b4a7a" stroke-width="1.3"/>
</svg>
<div style="left:544px;top:102px;width:378px;height:461px;background:#fff;"></div>
<span class="t" style="left:548.26px;top:105px;font-size:12px;line-height:20px;color:#000;transform:scaleX(1.0426);transform-origin:0 0;">Name</span>
<span class="t" style="left:686.28px;top:105px;font-size:12px;line-height:20px;color:#000;transform:scaleX(0.9373);transform-origin:0 0;">Value</span>
<div style="left:681px;top:103px;width:1px;height:23px;background:#e5e5e5;"></div>
<div style="left:565px;top:126px;width:357px;height:17px;background:#c0c0c0;"></div>
<svg style="left:550px;top:130px" width="10" height="7" viewBox="0 0 10 7"><path d="M1 1.5 L5 5.5 L9 1.5" fill="none" stroke="#333" stroke-width="1.7"/></svg>
<span class="t" style="left:567.81px;top:125px;font-size:12px;line-height:20px;color:#000;transform:scaleX(0.9455);transform-origin:0 0;">General</span>
<div style="left:682px;top:143px;width:240px;height:20px;background:#e0e0e0;"></div>
<svg style="left:588px;top:145px" width="16" height="16" viewBox="0 0 16 16">
<circle cx="8" cy="8" r="7.4" fill="#fff" stroke="#7a7a7a" stroke-width="1.1"/>
<path d="M5.6 6.3 C5.6 4.9 6.6 4.3 8 4.3 C9.5 4.3 10.5 5 10.5 6.2 C10.5 7.6 8.3 7.9 8.3 9.9" fill="none" stroke="#666" stroke-width="1.6"/>
<rect x="7.4" y="11" width="1.8" height="1.8" fill="#666"/>
</svg>
<span class="t" style="left:609.27px;top:144px;font-size:12px;line-height:20px;color:#000;transform:scaleX(1.0264);transform-origin:0 0;">Debug Mode</span>
<span class="t" style="left:685.34px;top:144px;font-size:12px;line-height:20px;color:#000;transform:scaleX(0.9111);transform-origin:0 0;">SWD</span>
<div style="left:585px;top:163px;width:337px;height:1px;background:#d0d0d0;"></div>
<svg style="left:588px;top:166px" width="16" height="16" viewBox="0 0 16 16">
<circle cx="8" cy="8" r="7.4" fill="#fff" stroke="#7a7a7a" stroke-width="1.1"/>
<path d="M5.6 6.3 C5.6 4.9 6.6 4.3 8 4.3 C9.5 4.3 10.5 5 10.5 6.2 C10.5 7.6 8.3 7.9 8.3 9.9" fill="none" stroke="#666" stroke-width="1.6"/>
<rect x="7.4" y="11" width="1.8" height="1.8" fill="#666"/>
</svg>
<span class="t" style="left:609.34px;top:165px;font-size:12px;line-height:20px;color:#000;transform:scaleX(0.9609);transform-origin:0 0;">Enable ETM</span>
<svg style="left:685px;top:168px" width="13" height="13" viewBox="0 0 13 13"><rect x="0.5" y="0.5" width="12" height="12" fill="#fff" stroke="#333"/></svg>
<div style="left:565px;top:183px;width:357px;height:18px;background:#c0c0c0;"></div>
<svg style="left:550px;top:188px" width="10" height="7" viewBox="0 0 10 7"><path d="M1 1.5 L5 5.5 L9 1.5" fill="none" stroke="#333" stroke-width="1.7"/></svg>
<span class="t" style="left:567.94px;top:183px;font-size:12px;line-height:20px;color:#000;transform:scaleX(0.9135);transform-origin:0 0;">SWD Pins</span>
<svg style="left:588px;top:205px" width="16" height="16" viewBox="0 0 16 16">
<circle cx="8" cy="8" r="7.4" fill="#fff" stroke="#7a7a7a" stroke-width="1.1"/>
<path d="M5.6 6.3 C5.6 4.9 6.6 4.3 8 4.3 C9.5 4.3 10.5 5 10.5 6.2 C10.5 7.6 8.3 7.9 8.3 9.9" fill="none" stroke="#666" stroke-width="1.6"/>
<rect x="7.4" y="11" width="1.8" height="1.8" fill="#666"/>
</svg>
<span class="t" style="left:609.44px;top:204px;font-size:12px;line-height:20px;color:#000;transform:scaleX(0.9211);transform-origin:0 0;">SWDIO</span>
<div style="left:683px;top:202px;width:26px;height:22px;background:#e1e1e1;border:1px solid #b4b4b4;"></div>
<svg style="left:683px;top:202.0px" width="26" height="22" viewBox="0 0 26 22">
<g fill="none" stroke="#111" stroke-width="1.15">
<ellipse cx="9.1" cy="13.5" rx="3.6" ry="2.6" transform="rotate(-45 9.1 13.5)"/>
<ellipse cx="14.5" cy="8.4" rx="3.6" ry="2.6" transform="rotate(-45 14.5 8.4)"/>
</g><path d="M10.4 12.6 L13.6 9.4" stroke="#222" stroke-width="0.9" stroke-dasharray="0.9 0.7"/></svg>
<div style="left:710.6px;top:202px;width:211.39999999999998px;height:22px;background:#e1e1e1;border:1px solid #b4b4b4;border-right:none;"></div>
<span class="t" style="left:713.24px;top:204px;font-size:12px;line-height:20px;color:#000;transform:scaleX(0.9647);transform-origin:0 0;">P6[6] digital_inout (SWDIO) [USED]</span>
<div style="left:585px;top:224px;width:337px;height:1px;background:#d0d0d0;"></div>
<svg style="left:588px;top:229px" width="16" height="16" viewBox="0 0 16 16">
<circle cx="8" cy="8" r="7.4" fill="#fff" stroke="#7a7a7a" stroke-width="1.1"/>
<path d="M5.6 6.3 C5.6 4.9 6.6 4.3 8 4.3 C9.5 4.3 10.5 5 10.5 6.2 C10.5 7.6 8.3 7.9 8.3 9.9" fill="none" stroke="#666" stroke-width="1.6"/>
<rect x="7.4" y="11" width="1.8" height="1.8" fill="#666"/>
</svg>
<span class="t" style="left:609.45px;top:228px;font-size:12px;line-height:20px;color:#000;transform:scaleX(0.9048);transform-origin:0 0;">SWCLK</span>
<div style="left:683px;top:226px;width:26px;height:22px;background:#e1e1e1;border:1px solid #b4b4b4;"></div>
<svg style="left:683px;top:226.0px" width="26" height="22" viewBox="0 0 26 22">
<g fill="none" stroke="#111" stroke-width="1.15">
<ellipse cx="9.1" cy="13.5" rx="3.6" ry="2.6" transform="rotate(-45 9.1 13.5)"/>
<ellipse cx="14.5" cy="8.4" rx="3.6" ry="2.6" transform="rotate(-45 14.5 8.4)"/>
</g><path d="M10.4 12.6 L13.6 9.4" stroke="#222" stroke-width="0.9" stroke-dasharray="0.9 0.7"/></svg>
<div style="left:710.6px;top:226px;width:211.39999999999998px;height:22px;background:#e1e1e1;border:1px solid #b4b4b4;border-right:none;"></div>
<span class="t" style="left:713.25px;top:228px;font-size:12px;line-height:20px;color:#000;transform:scaleX(0.9463);transform-origin:0 0;">P6[7] digital_in (SWCLK) [USED]</span>
<div style="left:585px;top:248px;width:337px;height:1px;background:#d0d0d0;"></div>
<svg style="left:588px;top:255px" width="16" height="16" viewBox="0 0 16 16">
<circle cx="8" cy="8" r="7.4" fill="#fff" stroke="#7a7a7a" stroke-width="1.1"/>
<path d="M5.6 6.3 C5.6 4.9 6.6 4.3 8 4.3 C9.5 4.3 10.5 5 10.5 6.2 C10.5 7.6 8.3 7.9 8.3 9.9" fill="none" stroke="#666" stroke-width="1.6"/>
<rect x="7.4" y="11" width="1.8" height="1.8" fill="#666"/>
</svg>
<span class="t" style="left:609.43px;top:254px;font-size:12px;line-height:20px;color:#000;transform:scaleX(0.9303);transform-origin:0 0;">SWO</span>
<div style="left:683px;top:250px;width:26px;height:24px;background:#e1e1e1;border:1px solid #b4b4b4;"></div>
<svg style="left:683px;top:251.0px" width="26" height="22" viewBox="0 0 26 22">
<g fill="none" stroke="#111" stroke-width="1.15">
<ellipse cx="9.1" cy="13.5" rx="3.6" ry="2.6" transform="rotate(-45 9.1 13.5)"/>
<ellipse cx="14.5" cy="8.4" rx="3.6" ry="2.6" transform="rotate(-45 14.5 8.4)"/>
</g><path d="M10.4 12.6 L13.6 9.4" stroke="#222" stroke-width="0.9" stroke-dasharray="0.9 0.7"/></svg>
<div style="left:711.9px;top:250px;width:210.10000000000002px;height:24px;background:#e1e1e1;border:1px solid #b4b4b4;border-right:none;"></div>
<span class="t" style="left:714.54px;top:254px;font-size:12px;line-height:20px;color:#000;transform:scaleX(0.9600);transform-origin:0 0;">P6[4] digital_out (SWO) [USED]</span>
<div style="left:585px;top:274px;width:337px;height:1px;background:#d0d0d0;"></div>
<div style="left:545px;top:546px;width:376px;height:15px;background:#f0f0f0;"></div>
<div style="left:562px;top:546px;width:326px;height:15px;background:#cdcdcd;"></div>
<svg style="left:549px;top:549px" width="8" height="10" viewBox="0 0 8 10"><path d="M6.4 1.6 L2.4 4.8 L6.4 8" fill="none" stroke="#555" stroke-width="2.2"/></svg>
<svg style="left:909px;top:549px" width="8" height="10" viewBox="0 0 8 10"><path d="M1.6 1.6 L5.6 4.8 L1.6 8" fill="none" stroke="#555" stroke-width="2.2"/></svg>
<div style="left:544px;top:102px;width:378px;height:461px;border:1px solid #828790;border-right:1px solid #828790;"></div>
<div style="left:544px;top:568px;width:379px;height:19px;background:#d9d9d9;border:1px solid #c4c4c4;border-right:none;"></div>
<span class="t" style="left:548.60px;top:569px;font-size:12px;line-height:20px;color:#000;transform:scaleX(0.9619);transform-origin:0 0;">Code Preview</span>
<svg style="left:884px;top:572px" width="11" height="11" viewBox="0 0 11 11">
<path d="M3.7 3.8 V1.6 H8.3 V6.7 H7" fill="none" stroke="#1a1a1a" stroke-width="1.1"/>
<rect x="3.2" y="1.1" width="5.6" height="1.9" fill="#1a1a1a"/>
<rect x="1.7" y="4.7" width="4.8" height="4.6" fill="none" stroke="#1a1a1a" stroke-width="1.1"/>
<rect x="1.2" y="4.2" width="5.8" height="1.9" fill="#1a1a1a"/>
</svg>
<svg style="left:905px;top:573px" width="10" height="10" viewBox="0 0 10 10"><path d="M1.5 1.5 L8.5 8.5 M8.5 1.5 L1.5 8.5" stroke="#222" stroke-width="1.8"/></svg>
<div style="left:544px;top:589px;width:378px;height:97px;background:#fff;"></div>
<span class="t" style="left:549.2px;top:593px;font-family:&quot;Liberation Mono&quot;,monospace;font-size:12px;line-height:20px;color:#000;-webkit-text-stroke:0;transform:scaleX(0.9735);transform-origin:0 0">/* NOTE: This is a preview only. It combines elements</span>
<div style="left:545px;top:669px;width:376px;height:15px;background:#f0f0f0;"></div>
<div style="left:562px;top:669px;width:226px;height:15px;background:#cdcdcd;"></div>
<svg style="left:549px;top:672px" width="8" height="10" viewBox="0 0 8 10"><path d="M6.4 1.6 L2.4 4.8 L6.4 8" fill="none" stroke="#555" stroke-width="2.2"/></svg>
<svg style="left:909px;top:672px" width="8" height="10" viewBox="0 0 8 10"><path d="M1.6 1.6 L5.6 4.8 L1.6 8" fill="none" stroke="#555" stroke-width="2.2"/></svg>
<div style="left:544px;top:589px;width:378px;height:97px;border:1px solid #828790;"></div>
<div style="left:546px;top:686px;width:96px;height:19px;background:#f0f0f0;border:1px solid #d9d9d9;border-top:none;"></div>
<span class="t" style="left:555.50px;top:686px;font-size:11px;line-height:20px;color:#000;transform:scaleX(0.9521);transform-origin:0 0;">Analog Diagram</span>
<div style="left:641px;top:686px;width:92px;height:21px;background:#fff;border:1px solid #d9d9d9;border-top:none;"></div>
<span class="t" style="left:653.92px;top:687px;font-size:11px;line-height:20px;color:#000;transform:scaleX(0.9647);transform-origin:0 0;">Code Preview</span>
<span class="t" style="left:2.68px;top:708px;font-size:12px;line-height:20px;color:#000;transform:scaleX(0.9244);transform-origin:0 0;">Ready</span>
<div style="left:36px;top:709px;width:1px;height:16px;background:#d9d9d9;"></div>
<svg style="left:911px;top:716px" width="10" height="10" viewBox="0 0 10 10" fill="#b0b0b0">
<rect x="7.5" y="1.5" width="1.5" height="1.5"/><rect x="4.5" y="4.5" width="1.5" height="1.5"/><rect x="7.5" y="4.5" width="1.5" height="1.5"/>
<rect x="1.5" y="7.5" width="1.5" height="1.5"/><rect x="4.5" y="7.5" width="1.5" height="1.5"/><rect x="7.5" y="7.5" width="1.5" height="1.5"/>
</svg>
<div style="left:0px;top:0px;width:923px;height:1px;background:#0a0d1a;"></div>
<div style="left:0px;top:0px;width:1px;height:728px;background:#858b95;"></div>
<div style="left:922px;top:0px;width:1px;height:728px;background:#8f9296;"></div>
<div style="left:922px;top:601px;width:1px;height:20px;background:#555;"></div>
<div style="left:922px;top:620px;width:1px;height:108px;background:#1c1c1c;"></div>
<div style="left:0px;top:727px;width:923px;height:1px;background:#7c8290;"></div>
</body></html>
